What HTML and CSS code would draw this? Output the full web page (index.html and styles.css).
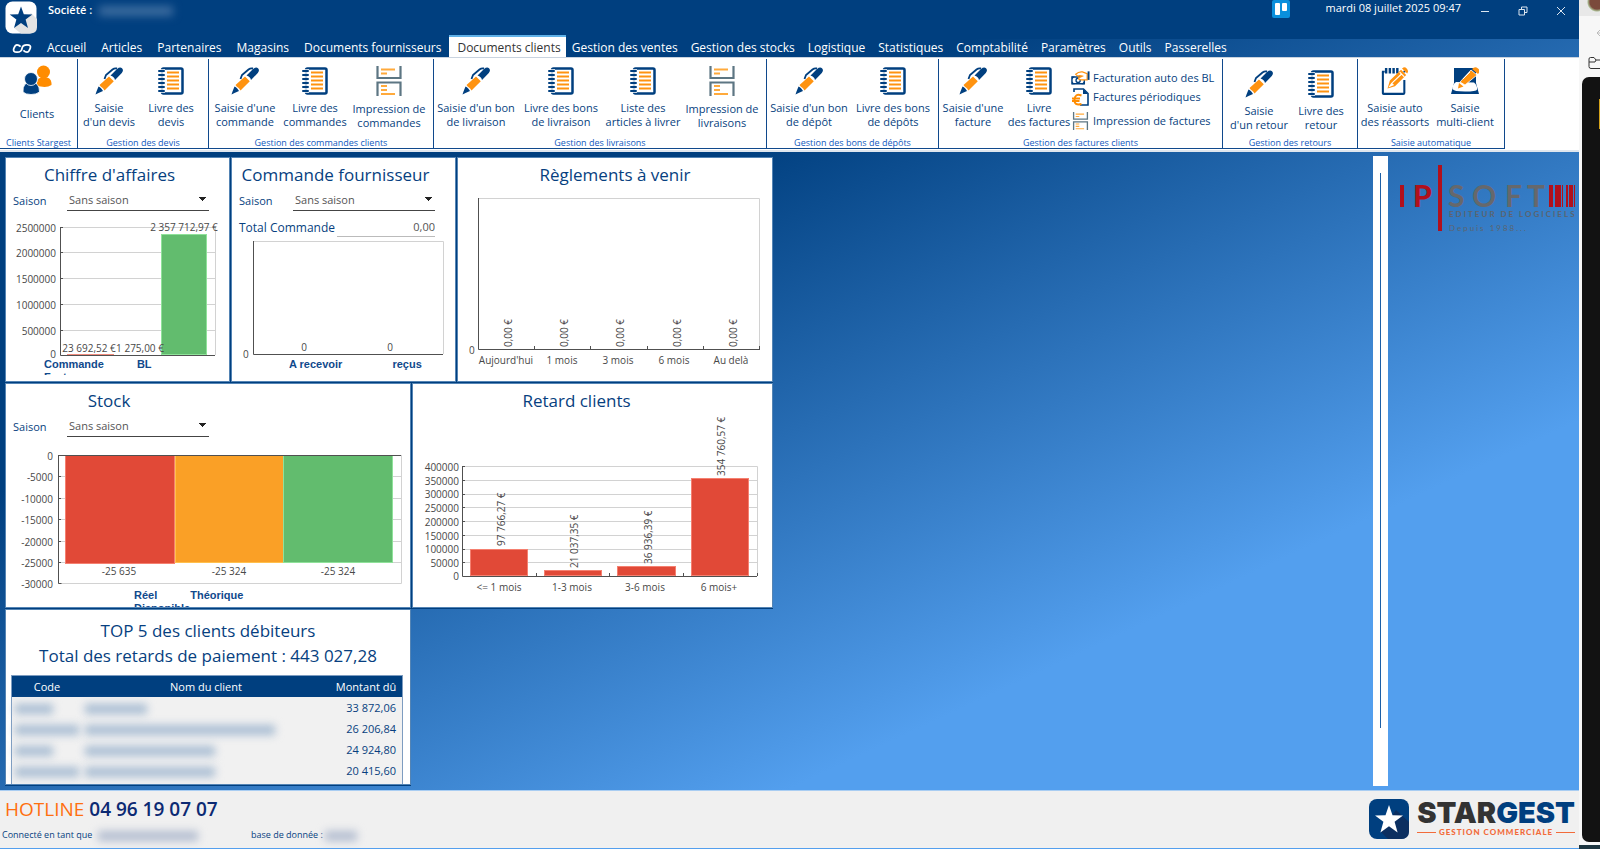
FILE: index.html
```html
<!DOCTYPE html>
<html lang="fr">
<head>
<meta charset="utf-8">
<title>Stargest - Gestion commerciale</title>
<link rel="stylesheet" href="styles.css">
</head>
<body>
<svg class="defs" aria-hidden="true">
  <symbol id="pen" viewBox="0 0 28 28">
    <path d="M4.500 18 14 9.500 18.800 14.200 9.500 23.500Q8 21 7 20.500T4.500 18Z" fill="#ff9310"/>
    <path d="M15.500 8.500 22 2Q25-.5 27 1.200T26.800 6L20 13Q19.500 11 18.500 10.200T15.500 8.500Z" fill="#003f7f"/>
    <path d="M22 1.500Q19.500 1 17.500 2.500L11 8 9.500 12" fill="none" stroke="#003f7f" stroke-width="1.800"/>
    <path d="M3.500 19.500Q5 20 6 21.200T8 24L3.500 26 .5 27.500 1.500 24.500Z" fill="#003f7f"/>
  </symbol>
  <symbol id="book" viewBox="0 0 26 28">
    <rect x="4" y="1.500" width="20.500" height="25" rx="1.500" fill="#fff" stroke="#003f7f" stroke-width="2.500"/>
    <path d="M1 4h6M1 8h6M1 12h6M1 16h6M1 20h6M1 24h6" stroke="#fff" stroke-width="3.500"/>
    <path d="M1 4h5M1 8h5M1 12h5M1 16h5M1 20h5M1 24h5" stroke="#003f7f" stroke-width="2" stroke-linecap="round"/>
    <path d="M9 5.500h12M9 9.500h12M9 13.500h12M9 17.500h12M9 21.500h12" stroke="#ff9310" stroke-width="2"/>
  </symbol>
  <symbol id="print" viewBox="0 0 26 30">
    <path d="M1.500 0v12h23V0M1.500 30V16.500h23V30" fill="none" stroke="#5d7683" stroke-width="2.200"/>
    <path d="M5 3.500h14M5 7.500h6M5 20h6M5 24h6M5 28h14" stroke="#ffaa3c" stroke-width="1.800"/>
  </symbol>
  <symbol id="people" viewBox="0 0 30 30">
    <path d="M15 21v-3q0-6 7-6t7.500 6v2q-3 2-7 2Z" fill="#ff8c00"/><circle cx="21.500" cy="7" r="6.500" fill="#ff8c00"/>
    <path d="M1 27q-.5-10 8-10t8.500 10q-3 2.500-8.500 2.500T1 27Z" fill="#003f7f" stroke="#fff" stroke-width=".8"/><circle cx="9" cy="14" r="6.500" fill="#003f7f" stroke="#fff" stroke-width=".8"/>
  </symbol>
  <symbol id="notepad" viewBox="0 0 30 30">
    <path d="M2 5v23q0 .8.800.8h21q1.200 0 1.200-1V14" fill="none" stroke="#003f7f" stroke-width="2.200"/>
    <path d="M1 5h3M24 5h2" stroke="#003f7f" stroke-width="2"/>
    <path d="M5.500 1v6M9.500 1v6M13.500 1v6M17.500 1v6" stroke="#003f7f" stroke-width="2.600"/>
    <path d="M7 23 9.500 14.500 21.500 3 27 8.500 15 20.500ZM22.500 1.500 24 .5Q26 0 27.500 1.500T29 5L28 7Z" fill="#ff9310"/>
    <path d="M20 5.500 25 10.500M12 17 22 7.500M9.500 20.500l2-3 1.500 1.500Z" stroke="#fff" fill="#fff" stroke-width="1.200"/>
  </symbol>
  <symbol id="multi" viewBox="0 0 28 28">
    <path d="M3 1h22v15l3 11H0l3-11Z" fill="#003f7f"/>
    <path d="M5 15q-4 3-3.500 7 1 2.500 12.500 2.500t12-2q.5-4-3-7Z" fill="#fff"/>
    <path d="M9 15 20 3l6 5L14 18Z" fill="#ff9310" stroke="#fff" stroke-width=".8"/>
    <path d="M8 16l4.500 3.500L7 21.500ZM21 2q3-3 6-.5T27 7Z" fill="#ff9310"/>
    <path d="M19 5l-7 7" stroke="#fff"/>
  </symbol>
  <symbol id="money" viewBox="0 0 20 16">
    <path d="M1 7h13v7H1Z" fill="none" stroke="#003f7f" stroke-width="1.500"/>
    <path d="M1 6.500h3L1 9.500ZM14 14.500h-3l3-3ZM1 14.500v-3l3 3Z" fill="#003f7f"/>
    <circle cx="7.500" cy="10.500" r="2.200" fill="none" stroke="#003f7f" stroke-width="1.400"/>
    <path d="M5 4Q8 1 12 1.500L17 3.500V10H11Q8 10 8 8L12 6Q9 5 7 6Z" fill="#fff" stroke="#ff9310" stroke-width="1.300"/>
    <path d="M18.500 1v9" stroke="#003f7f" stroke-width="2"/>
  </symbol>
  <symbol id="euro" viewBox="0 0 17 18">
    <path d="M2 4V1h9.500L16 5.500V17H8" fill="none" stroke="#003f7f" stroke-width="1.600"/><path d="M11 1v5h5Z" fill="#003f7f"/>
    <path d="M9.500 7.500Q3 5 2.500 11.500T9.500 16M0 10.500h8M0 13h7.500" fill="none" stroke="#ff8c00" stroke-width="2"/>
  </symbol>
</svg>

<div class="desktop">
<div class="app">
  <header class="titlebar">
    <svg class="applogo" viewBox="0 0 32 33"><rect x=".5" y=".5" width="31" height="32" rx="7" fill="#fff"/><path d="M26 12 32 18V26q0 6.500-7 6.500H16L9 27Z" fill="#e3e3e3"/><path d="M16 5.500 18.800 13.300 27.300 13.500 20.600 18.600 23 27 16 22 9 27 11.400 18.600 4.700 13.500 13.200 13.300Z" fill="#003f7f"/></svg>
    <span class="company">Société : <span class="redacted redacted-company"></span></span>
    <svg class="trello" viewBox="0 0 18 18"><rect width="18" height="18" rx="2" fill="#0a8fdc"/><rect x="3" y="3" width="5" height="12" rx="1" fill="#fff"/><rect x="10" y="3" width="5" height="8" rx="1" fill="#fff"/></svg>
    <time class="clock">mardi 08 juillet 2025 09:47</time>
    <div class="winbtns">
      <button aria-label="Réduire"><svg viewBox="0 0 10 10"><path d="M1 5.500h8"/></svg></button>
      <button aria-label="Restaurer"><svg viewBox="0 0 10 10"><path d="M1 3.500h5.500V9H1ZM3.500 3V1H9v5.500H7"/></svg></button>
      <button aria-label="Fermer"><svg viewBox="0 0 10 10"><path d="M1 1l8 8M9 1 1 9"/></svg></button>
    </div>
  </header>

  <nav class="menu">
    <button class="infinity" aria-label="Menu"><svg viewBox="0 0 22 12"><path d="M9.500 4Q7.500 2 5.500 2T2 6 5.500 10 11 6 16.500 2 20 6 16.500 10 12.500 8"/></svg></button>
    <button>Accueil</button><button>Articles</button><button>Partenaires</button><button>Magasins</button><button>Documents fournisseurs</button><button class="active">Documents clients</button><button>Gestion des ventes</button><button>Gestion des stocks</button><button>Logistique</button><button>Statistiques</button><button>Comptabilité</button><button>Paramètres</button><button>Outils</button><button>Passerelles</button>
  </nav>

  <section class="ribbon">
    <div class="group g-clients"><div class="tools">
      <button class="tool people"><svg><use href="#people"/></svg><span>Clients</span></button>
    </div><p>Clients Stargest</p></div>
    <div class="group g-devis"><div class="tools">
      <button class="tool"><svg><use href="#pen"/></svg><span>Saisie<br>d'un devis</span></button>
      <button class="tool"><svg><use href="#book"/></svg><span>Livre des<br>devis</span></button>
    </div><p>Gestion des devis</p></div>
    <div class="group g-commandes"><div class="tools">
      <button class="tool"><svg><use href="#pen"/></svg><span>Saisie d'une<br>commande</span></button>
      <button class="tool"><svg><use href="#book"/></svg><span>Livre des<br>commandes</span></button>
      <button class="tool print"><svg><use href="#print"/></svg><span>Impression de<br>commandes</span></button>
    </div><p>Gestion des commandes clients</p></div>
    <div class="group g-livraisons"><div class="tools">
      <button class="tool"><svg><use href="#pen"/></svg><span>Saisie d'un bon<br>de livraison</span></button>
      <button class="tool"><svg><use href="#book"/></svg><span>Livre des bons<br>de livraison</span></button>
      <button class="tool"><svg><use href="#book"/></svg><span>Liste des<br>articles à livrer</span></button>
      <button class="tool print"><svg><use href="#print"/></svg><span>Impression de<br>livraisons</span></button>
    </div><p>Gestion des livraisons</p></div>
    <div class="group g-depots"><div class="tools">
      <button class="tool"><svg><use href="#pen"/></svg><span>Saisie d'un bon<br>de dépôt</span></button>
      <button class="tool"><svg><use href="#book"/></svg><span>Livre des bons<br>de dépôts</span></button>
    </div><p>Gestion des bons de dépôts</p></div>
    <div class="group g-factures"><div class="tools">
      <button class="tool"><svg><use href="#pen"/></svg><span>Saisie d'une<br>facture</span></button>
      <button class="tool"><svg><use href="#book"/></svg><span>Livre<br>des factures</span></button>
      <div class="stack">
        <button><svg><use href="#money"/></svg>Facturation auto des BL</button>
        <button><svg><use href="#euro"/></svg>Factures périodiques</button>
        <button><svg><use href="#print"/></svg>Impression de factures</button>
      </div>
    </div><p>Gestion des factures clients</p></div>
    <div class="group g-retours"><div class="tools low">
      <button class="tool"><svg><use href="#pen"/></svg><span>Saisie<br>d'un retour</span></button>
      <button class="tool"><svg><use href="#book"/></svg><span>Livre des<br>retour</span></button>
    </div><p>Gestion des retours</p></div>
    <div class="group g-auto"><div class="tools">
      <button class="tool"><svg><use href="#notepad"/></svg><span>Saisie auto<br>des réassorts</span></button>
      <button class="tool"><svg><use href="#multi"/></svg><span>Saisie<br>multi-client</span></button>
    </div><p>Saisie automatique</p></div>
  </section>

  <main class="workspace">
    <div class="dashboard">
      <div class="row row-top">
        <section class="panel">
          <h2 class="shift">Chiffre d'affaires</h2>
          <div class="field"><label for="s1">Saison</label><select id="s1"><option>Sans saison</option></select></div>
          <svg class="chart after-field" width="222" height="144" viewBox="6 214 222 144">
            <path class="grid" d="M60 227.500H215M60 252.500H215M60 278.500H215M60 304.500H215M60 330.500H215M215.500 227V355"/>
            <path class="axis" d="M60.500 227V355.500H215M60 227.500h3M60 252.500h3M60 278.500h3M60 304.500h3M60 330.500h3"/>
            <rect class="bar green" x="161.500" y="234.500" width="45" height="120"/><path d="M67 354.500h47" stroke="#ef8a7d"/>
            <g class="end"><text x="56" y="232">2500000</text><text x="56" y="257">2000000</text><text x="56" y="283">1500000</text><text x="56" y="309">1000000</text><text x="56" y="335">500000</text><text x="56" y="358">0</text></g>
            <g class="mid"><text x="89" y="352">23 692,52 €</text><text x="140" y="352">1 275,00 €</text><text x="184" y="231">2 357 712,97 €</text></g>
          </svg>
          <div class="legend legend-ca"><span>Commande</span><span>BL</span><span>Facture</span></div>
        </section>
        <section class="panel">
          <h2 class="shift">Commande fournisseur</h2>
          <div class="field"><label for="s2">Saison</label><select id="s2"><option>Sans saison</option></select></div>
          <div class="total"><label for="tot">Total Commande</label><input id="tot" value="0,00" readonly></div>
          <svg class="chart" width="222" height="120" viewBox="232 238 222 120">
            <path class="grid" d="M253 241.500H443.500V354"/><path class="axis" d="M253.500 241V354.500H443"/>
            <text x="243" y="358">0</text><g class="mid"><text x="304" y="351">0</text><text x="390" y="351">0</text></g>
          </svg>
          <div class="legend legend-cf"><span>A recevoir</span><span>reçus</span></div>
        </section>
        <section class="panel">
          <h2>Règlements à venir</h2>
          <svg class="chart" width="312" height="184" viewBox="458 188 312 184">
            <path class="grid" d="M478 198.500H759.500V349"/><path class="axis" d="M478.500 198V349.500H760M534.500 346v3M590.500 346v3M647.500 346v3M703.500 346v3M759.500 346v3"/>
            <text x="469" y="354">0</text>
            <g><text transform="translate(512 347) rotate(-90)">0,00 €</text><text transform="translate(568 347) rotate(-90)">0,00 €</text><text transform="translate(624 347) rotate(-90)">0,00 €</text><text transform="translate(681 347) rotate(-90)">0,00 €</text><text transform="translate(737 347) rotate(-90)">0,00 €</text></g>
            <g class="mid"><text x="506" y="364">Aujourd'hui</text><text x="562" y="364">1 mois</text><text x="618" y="364">3 mois</text><text x="674" y="364">6 mois</text><text x="731" y="364">Au delà</text></g>
          </svg>
        </section>
      </div>
      <div class="row row-mid">
        <section class="panel">
          <h2 class="narrow">Stock</h2>
          <div class="field"><label for="s3">Saison</label><select id="s3"><option>Sans saison</option></select></div>
          <svg class="chart after-field" width="403" height="149" viewBox="6 440 403 149">
            <path class="grid" d="M58 476.500H401M58 498.500H401M58 519.500H401M58 541.500H401M58 562.500H401M58 583.500H401.500V455"/>
            <rect class="bar red" x="65.500" y="455.500" width="109" height="108"/><rect class="bar orange" x="175.500" y="455.500" width="108" height="107"/><rect class="bar green" x="283.500" y="455.500" width="109" height="107"/>
            <path class="axis" d="M401 455.500H58M58.500 455V583.500h3M58 476.500h3M58 498.500h3M58 519.500h3M58 541.500h3M58 562.500h3"/>
            <g class="end"><text x="53" y="460">0</text><text x="53" y="481">-5000</text><text x="53" y="503">-10000</text><text x="53" y="524">-15000</text><text x="53" y="546">-20000</text><text x="53" y="567">-25000</text><text x="53" y="588">-30000</text></g>
            <g class="mid"><text x="119" y="575">-25 635</text><text x="229" y="575">-25 324</text><text x="338" y="575">-25 324</text></g>
          </svg>
          <div class="legend legend-st"><span>Réel</span><span>Théorique</span><span>Disponible</span></div>
        </section>
        <section class="panel">
          <h2 class="shift-more">Retard clients</h2>
          <svg class="chart" width="358" height="185" viewBox="413 414 358 185">
            <path class="grid" d="M462 466.500H757.500V576M462 480.500H757M462 494.500H757M462 507.500H757M462 521.500H757M462 535.500H757M462 549.500H757M462 562.500H757"/>
            <rect class="bar red" x="470.500" y="549.500" width="57" height="26"/><rect class="bar red" x="544.500" y="570.500" width="57" height="5"/><rect class="bar red" x="617.500" y="566.500" width="58" height="9"/><rect class="bar red" x="691.500" y="478.500" width="57" height="97"/>
            <path class="axis" d="M462.500 466V576.500H757M536.500 573v3M609.500 573v3M683.500 573v3M757.500 573v3M462 466.500h3M462 480.500h3M462 494.500h3M462 507.500h3M462 521.500h3M462 535.500h3M462 549.500h3M462 562.500h3"/>
            <g class="end"><text x="459" y="471">400000</text><text x="459" y="485">350000</text><text x="459" y="498">300000</text><text x="459" y="512">250000</text><text x="459" y="526">200000</text><text x="459" y="540">150000</text><text x="459" y="553">100000</text><text x="459" y="567">50000</text><text x="459" y="580">0</text></g>
            <g><text transform="translate(505 546) rotate(-90)">97 766,27 €</text><text transform="translate(578 568) rotate(-90)">21 037,35 €</text><text transform="translate(652 564) rotate(-90)">36 936,39 €</text><text transform="translate(725 476) rotate(-90)">354 760,57 €</text></g>
            <g class="mid"><text x="499" y="591">&lt;= 1 mois</text><text x="572" y="591">1-3 mois</text><text x="645" y="591">3-6 mois</text><text x="719" y="591">6 mois+</text></g>
          </svg>
        </section>
      </div>
      <div class="row row-bottom">
        <section class="panel top5">
          <h2>TOP 5 des clients débiteurs</h2>
          <h2>Total des retards de paiement : 443 027,28</h2>
          <table>
            <thead><tr><th>Code</th><th>Nom du client</th><th>Montant dû</th></tr></thead>
            <tbody>
              <tr><td><span class="redacted r1"></span></td><td><span class="redacted r2"></span></td><td>33 872,06</td></tr>
              <tr><td><span class="redacted r3"></span></td><td><span class="redacted r4"></span></td><td>26 206,84</td></tr>
              <tr><td><span class="redacted r1"></span></td><td><span class="redacted r5"></span></td><td>24 924,80</td></tr>
              <tr><td><span class="redacted r3"></span></td><td><span class="redacted r5"></span></td><td>20 415,60</td></tr>
              <tr><td></td><td></td><td></td></tr>
            </tbody>
          </table>
        </section>
      </div>
    </div>
    <div class="rail"></div>
    <svg class="ipsoft" viewBox="1396 160 182 76" width="182" height="76">
      <rect x="1400" y="185" width="4" height="22" fill="#b1101c"/><text class="ip" x="1413" y="207">P</text>
      <rect x="1438" y="165" width="4" height="66" fill="#b1101c"/>
      <g class="soft"><text x="1448" y="207">S</text><text x="1472" y="207">O</text><text x="1505" y="207">F</text><text x="1527" y="207">T</text></g>
      <path d="M1549 185h4v22h-4ZM1555 185h6v22h-6ZM1562 185h1v22h-1ZM1566 185h2v22h-2ZM1569 185h4v22h-4ZM1574 185h1v22h-1Z" fill="#b1101c"/>
      <text class="tag wide" x="1449" y="217">EDITEUR DE LOGICIELS</text><text class="tag light" x="1449" y="231">Depuis 1988...</text>
    </svg>
  </main>

  <footer class="footer">
    <div class="contact">
      <p class="hotline"><span>HOTLINE</span> 04 96 19 07 07</p>
      <p class="session"><span class="user">Connecté en tant que <span class="redacted r-user"></span></span><span>base de donnée : <span class="redacted r-base"></span></span></p>
    </div>
    <div class="brand">
      <svg viewBox="0 0 40 40" width="40" height="40"><rect width="40" height="40" rx="8" fill="#003f7f"/><path d="M27 11 40 23v9q0 8-8 8H19L12 33Z" fill="#0c2f60"/><path d="M20 6 23.500 16.300 34 16.500 25.600 22.800 28.600 33.500 20 27.200 11.400 33.500 14.400 22.800 6 16.500 16.500 16.300Z" fill="#fff"/></svg>
      <div class="brandtext"><p class="name">STAR<b>GEST</b></p><p class="sub">GESTION COMMERCIALE</p></div>
    </div>
  </footer>
</div>
<aside class="behind">
  <div class="avatar"></div>
  <svg class="arrow" viewBox="0 0 10 12"><path d="M10 6H2M6 2 2 6l4 4"/></svg>
  <svg class="folder" viewBox="0 0 14 14"><path d="M14 12.500H3q-2 0-2-2V3q0-1.500 1.500-1.500H6L8 4h6M1 6h6l1-2"/></svg>
  <div class="dark"></div>
  <div class="shore"></div>
</aside>
</div>
</body>
</html>
```
FILE: styles.css
```css
* { box-sizing: border-box; }
body, p, h2 { margin: 0; }
body { font-family: "Open Sans", "Noto Sans", sans-serif; font-size: 12px; color: #073f80; }
button { border: 0; padding: 0; background: none; font: inherit; color: inherit; }
.defs { position: absolute; width: 0; height: 0; }
.desktop { display: flex; height: 100vh; overflow: hidden; }
.app {
  flex: 1; min-width: 0; display: flex; flex-direction: column;
  background: linear-gradient(155deg, #003f7f 31%, #539fee 73%);
}

/* title bar */
.titlebar { display: flex; align-items: flex-start; flex: none; height: 39px; padding-left: 5px; background: #003f7f; color: #fff; line-height: 16px; font-weight: 600; }
.applogo { width: 32px; height: 33px; margin-top: 1px; }
.company { margin: 2px auto 0 11px; font-size: 11px; }
.trello { width: 18px; height: 18px; margin-right: 36px; }
.clock { font-size: 11px; font-weight: 500; }
.winbtns { display: flex; gap: 18px; margin: 2px 8px 0 14px; }
.winbtns button { width: 20px; height: 20px; }
.winbtns svg { width: 10px; height: 10px; fill: none; stroke: #dce6f0; }

/* menu */
.menu { display: flex; flex: none; height: 18px; color: #fff; font-size: 12px; font-weight: 500; line-height: 16px; overflow: visible; }
.menu button { padding: 0 8px 0 7px; white-space: nowrap; }
.menu .infinity { width: 40px; padding: 3px 0 0 4px; text-align: center; }
.infinity svg { width: 20px; height: 11px; fill: none; stroke: #fff; stroke-width: 2; }
.menu .active { margin: -4px 0 0; padding: 2px 5px 0 8px; background: #fff; color: #333; border-top: 2px solid #5fb1e8; }
.menu .active ~ button { padding: 0 7px 0 6px; }

/* ribbon */
.ribbon { display: flex; flex: none; height: 95px; padding-top: 1px; background: #fff; border-top: 1px solid #c9d3df; border-bottom: 2px solid #dfe6ee; }
.group { display: flex; flex-direction: column; height: 90px; border-right: 1px solid #10498c; border-bottom: 1px solid #10498c; }
.group p { padding-top: 1px; font-size: 9px; line-height: 11px; text-align: center; color: #0f58bd; font-weight: 500; white-space: nowrap; }
.tools { display: grid; flex: 1; }
.tools.low { padding-top: 3px; }
.tool { display: flex; flex-direction: column; align-items: center; padding-top: 8px; line-height: 14px; white-space: nowrap; font-weight: 500; font-size: 11px; }
.tool svg { width: 28px; height: 28px; margin-bottom: 6px; }
.tool.print { padding-top: 7px; }
.tool.print svg { height: 30px; }
.tool.people { padding: 6px 3px 0 0; }
.tool.people svg { width: 30px; height: 30px; margin-bottom: 12px; }
.g-clients { width: 78px; }
.g-devis { width: 131px; } .g-devis .tools { grid-template-columns: 62px 62px; }
.g-commandes { width: 225px; } .g-commandes .tools { grid-template-columns: 72px 68px 80px; }
.g-livraisons { width: 333px; } .g-livraisons .tools { grid-template-columns: 84px 86px 78px 80px; }
.g-depots { width: 172px; } .g-depots .tools { grid-template-columns: 84px 84px; }
.g-factures { width: 284px; } .g-factures .tools { grid-template-columns: 68px 64px 1fr; }
.g-retours { width: 135px; } .g-retours .tools { grid-template-columns: 72px 52px; }
.g-auto { width: 147px; } .g-auto .tools { grid-template-columns: 74px 66px; }
.stack { display: flex; flex-direction: column; padding-top: 9px; }
.stack button { display: flex; align-items: center; gap: 3px; height: 19px; font-size: 11px; font-weight: 500; white-space: nowrap; }
.stack button:last-child { margin-top: 5px; }
.stack svg { width: 19px; height: 18px; }

/* workspace */
.workspace { display: flex; flex: 1; min-height: 0; align-items: flex-start; padding: 4px 0 4px 5px; }
.dashboard { display: flex; flex-direction: column; align-items: flex-start; height: 100%; padding-top: 1px; overflow: hidden; margin-right: auto; }
.row { display: grid; gap: 1px; background: #003f7f; padding-bottom: 1px; }
.row-top { grid-template-columns: 225px 225px 316px; height: 226px; }
.row-mid { grid-template-columns: 406px 361px; height: 226px; }
.row-bottom { grid-template-columns: 406px; flex: 1; min-height: 0; }
.panel { position: relative; background: #fff; border: 1px solid #5484b4; overflow: hidden; }
h2 { padding-top: 4px; font-size: 17px; line-height: 26px; font-weight: 500; text-align: center; white-space: nowrap; }
.shift { padding-right: 16px; }
.shift-more { padding-right: 32px; }
.narrow { width: 206px; }
.field { display: flex; align-items: center; height: 25px; padding-left: 7px; font-size: 11px; }
.field label { width: 54px; font-weight: 500; }
.field select {
  width: 142px; height: 21px; padding: 0 2px; border: 0; border-bottom: 1px solid #444; border-radius: 0;
  appearance: none; font: inherit; line-height: 18px; color: #555;
  background: linear-gradient(135deg, #222 50%, transparent 50%) no-repeat right 2px top 7px / 4px 4px, linear-gradient(225deg, #222 50%, transparent 50%) no-repeat right 6px top 7px / 4px 4px;
}
.total { display: flex; align-items: flex-start; height: 25px; padding: 5px 0 0 7px; font-size: 12px; font-weight: 500; line-height: 20px; white-space: nowrap; }
.total label { width: 98px; }
.total input { width: 98px; height: 19px; border: 0; border-bottom: 1px solid #bbb; padding: 0; text-align: right; font: inherit; font-size: 11px; font-weight: 400; color: #555; }
.chart { display: block; font-size: 10px; font-weight: 500; fill: #484848; }
.after-field { margin-top: 1px; }
.end text { text-anchor: end; }
.mid text { text-anchor: middle; }
.grid { stroke: #d2d2d2; fill: none; }
.axis { stroke: #505050; fill: none; }
.green { fill: #62bc6e; stroke: #8fe29a; }
.red { fill: #e14937; stroke: #f58070; }
.orange { fill: #faa026; stroke: #ffc04d; }
.legend { display: flex; flex-wrap: wrap; overflow: hidden; font: bold 11px/13px "Liberation Sans", Arial, sans-serif; color: #10498c; }
.legend-ca { width: 160px; height: 17px; margin-left: 38px; column-gap: 33px; }
.legend-cf { margin-left: 57px; column-gap: 50px; }
.legend-st { width: 160px; margin-left: 128px; column-gap: 33px; }
.top5 h2 { padding-top: 8px; }
.top5 h2 + h2 { padding-top: 0; line-height: 24px; }
table { width: calc(100% - 14px); margin: 8px 7px 0 6px; border-collapse: collapse; background: #f1f1f1; outline: 1px solid #7d9cc0; font-size: 11px; table-layout: fixed; }
th { background: #003f7f; color: #fff; font-weight: 500; height: 21px; padding: 0; }
th:first-child { width: 70px; }
th:last-child { width: 72px; }
td { height: 21px; padding: 0 6px 0 3px; line-height: 14px; }
td:last-child { text-align: right; font-weight: 500; }
.redacted { display: inline-block; height: 10px; background: #a9bdd3; filter: blur(4px); vertical-align: middle; }
.redacted-company { width: 74px; margin-left: 4px; background: #3c6c9f; }
.r1 { width: 38px; } .r2 { width: 62px; } .r3 { width: 64px; } .r4 { width: 190px; } .r5 { width: 130px; }
.r-user { width: 100px; margin-left: 3px; background: #b3bdd0; } .r-base { width: 32px; background: #b3bdd0; }
.rail { width: 15px; height: 100%; padding: 17px 7px 58px; background: #fff; }
.rail::before { content: ""; display: block; width: 1px; height: 100%; background: #1c5fa6; }
.ipsoft { margin: 4px 1px 0 8px; }
.ip, .soft { font: 900 30px Lato, sans-serif; fill: #b1101c; }
.soft { font-weight: 700; fill: #66686c; }
.tag { font: 700 8px Lato, sans-serif; fill: #5a6470; letter-spacing: 2px; }
.light { font-weight: 400; }

/* footer */
.footer { display: flex; flex: none; justify-content: space-between; height: 59px; padding: 5px 4px 0 2px; background: #f0f0f0; border-top: 1px solid #a9cdf2; border-bottom: 1px solid #539fee; }
.hotline { padding-left: 3px; font-size: 19px; line-height: 26px; color: #0c2a73; font-weight: 600; }
.hotline span { color: #ff6f0f; font-weight: 500; }
.session { display: flex; margin-top: 5px; font-size: 9px; font-weight: 500; line-height: 16px; white-space: nowrap; }
.user { width: 249px; }
.brand { display: flex; gap: 8px; padding-top: 3px; }
.name { font: 900 29px/28px Inter, sans-serif; color: #333; }
.name b { font-weight: 900; color: #003f7f; }
.sub { display: flex; align-items: center; gap: 3px; font: 900 8px/10px Lato, sans-serif; letter-spacing: 1px; color: #f26b3a; }
.sub::before, .sub::after { content: ""; flex: 1; height: 1px; background: #f26b3a; }

/* window behind */
.behind { display: flex; flex-direction: column; width: 21px; background: #f7f7f7; overflow: hidden; }
.avatar { height: 16px; background: radial-gradient(circle at 18px 2px, #7b4a3c 7px, #a8b98f 9px, #e8e8e8 10px); }
.arrow { width: 10px; height: 12px; margin: 11px 0 0 16px; fill: none; stroke: #bbb; }
.folder { width: 14px; height: 14px; margin: 17px 0 0 9px; fill: none; stroke: #333; }
.dark { flex: 1; margin: 7px 0 3px 3px; border-radius: 7px 0 0 7px; background: linear-gradient(#d3a21a, #d3a21a) no-repeat right 0 top 22px / 1px 30px, #121212; }
.shore { height: 4px; background: #1d3540; }
```
